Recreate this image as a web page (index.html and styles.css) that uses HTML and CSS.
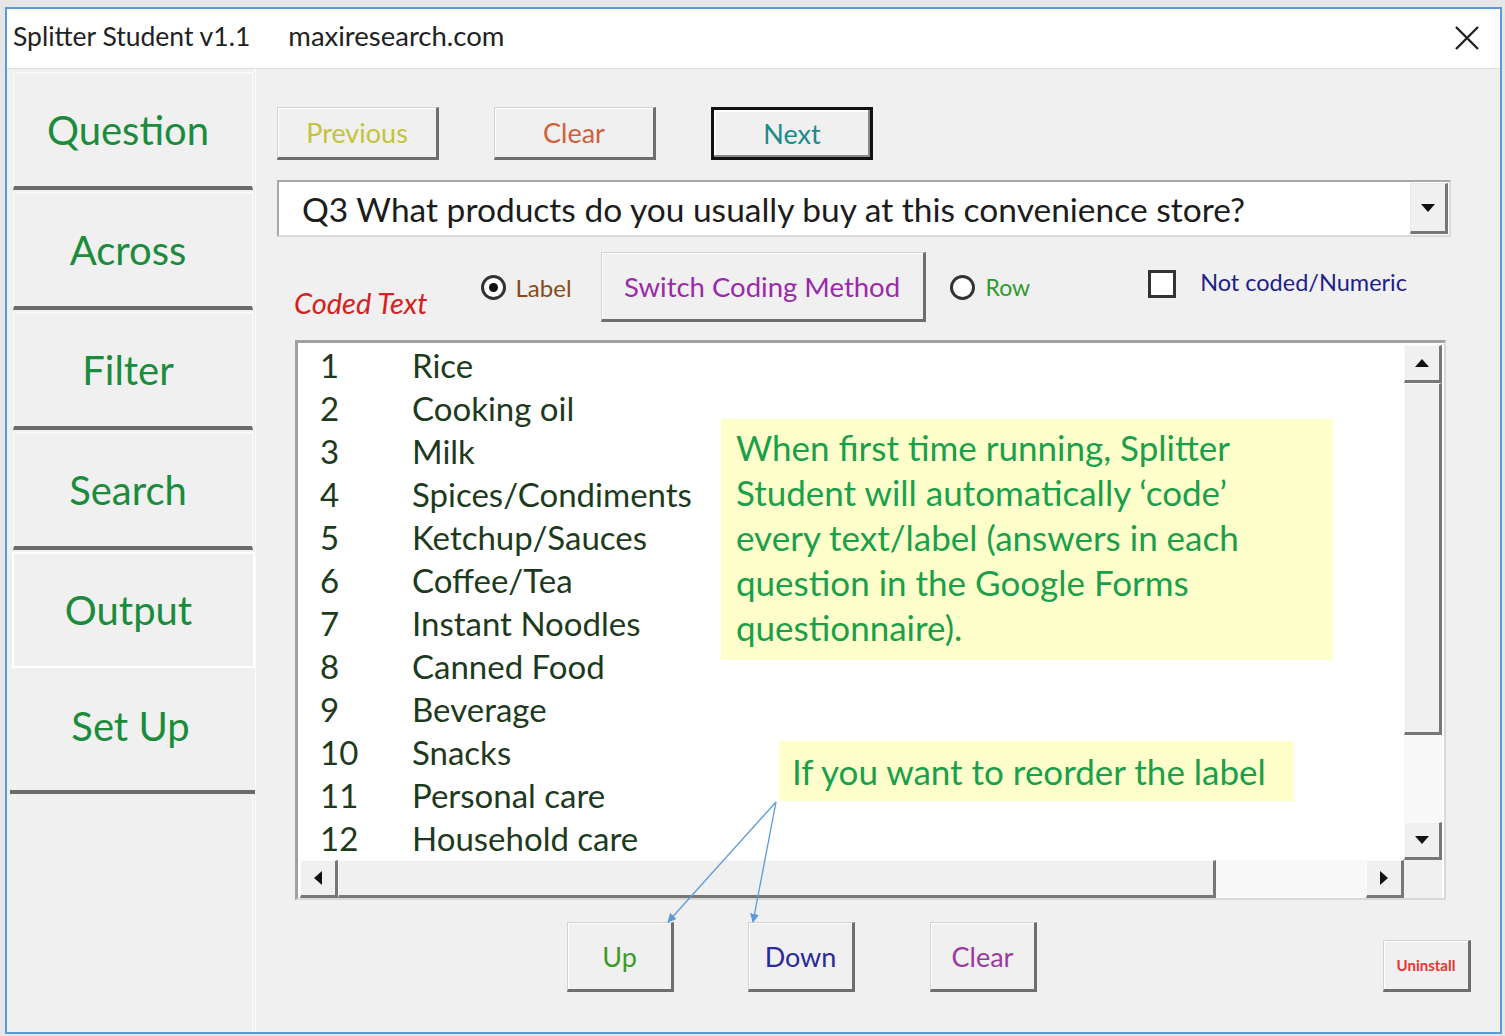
FILE: index.html
```html
<!DOCTYPE html>
<html>
<head>
<meta charset="utf-8">
<title>Splitter Student v1.1</title>
<link rel="stylesheet" href="styles.css">
</head>
<body>
<div class="window">
  <div class="titlebar">
    <span class="app-name">Splitter Student v1.1</span>
    <span class="site">maxiresearch.com</span>
    <svg class="close" width="26" height="26" viewBox="0 0 26 26"><path d="M2 2 L24 24 M24 2 L2 24" stroke="#222" stroke-width="2.4" fill="none"/></svg>
  </div>
  <div class="content">
    <nav class="nav">
      <div class="tab">Question</div>
      <div class="tab">Across</div>
      <div class="tab">Filter</div>
      <div class="tab">Search</div>
      <div class="tab active">Output</div>
      <div class="tab setup">Set Up</div>
      <div class="nav-rest"></div>
    </nav>
    <main class="main">
      <div class="btn-row">
        <button class="btn btn-prev">Previous</button>
        <button class="btn btn-clear">Clear</button>
        <button class="btn btn-next">Next</button>
      </div>
      <div class="combo">
        <span class="combo-text">Q3 What products do you usually buy at this convenience store?</span>
        <span class="combo-drop"><span class="tri-down"></span></span>
      </div>
      <div class="opt-row">
        <span class="coded">Coded Text</span>
        <span class="radio checked"></span>
        <span class="opt-label lbl-label">Label</span>
        <button class="btn btn-switch">Switch Coding Method</button>
        <span class="radio"></span>
        <span class="opt-label lbl-row">Row</span>
        <span class="check"></span>
        <span class="opt-label lbl-num">Not coded/Numeric</span>
      </div>
      <div class="listbox">
        <div class="list-items">
          <div class="item"><span class="num">1</span><span>Rice</span></div>
          <div class="item"><span class="num">2</span><span>Cooking oil</span></div>
          <div class="item"><span class="num">3</span><span>Milk</span></div>
          <div class="item"><span class="num">4</span><span>Spices/Condiments</span></div>
          <div class="item"><span class="num">5</span><span>Ketchup/Sauces</span></div>
          <div class="item"><span class="num">6</span><span>Coffee/Tea</span></div>
          <div class="item"><span class="num">7</span><span>Instant Noodles</span></div>
          <div class="item"><span class="num">8</span><span>Canned Food</span></div>
          <div class="item"><span class="num">9</span><span>Beverage</span></div>
          <div class="item"><span class="num">10</span><span>Snacks</span></div>
          <div class="item"><span class="num">11</span><span>Personal care</span></div>
          <div class="item"><span class="num">12</span><span>Household care</span></div>
        </div>
        <div class="vscroll">
          <span class="sb-btn"><span class="tri-up"></span></span>
          <span class="sb-thumb-v"></span>
          <span class="sb-track"></span>
          <span class="sb-btn"><span class="tri-down"></span></span>
        </div>
        <div class="hscroll">
          <span class="sb-btn"><span class="tri-left"></span></span>
          <span class="sb-thumb-h"></span>
          <span class="sb-track"></span>
          <span class="sb-btn"><span class="tri-right"></span></span>
        </div>
        <div class="sb-corner"></div>
        <div class="note note-1">When first time running, Splitter<br>Student will automatically ‘code’<br>every text/label (answers in each<br>question in the Google Forms<br>questionnaire).</div>
        <div class="note note-2">If you want to reorder the label</div>
      </div>
      <div class="bottom-row">
        <button class="btn btn-up">Up</button>
        <button class="btn btn-down">Down</button>
        <button class="btn btn-clear2">Clear</button>
        <button class="btn btn-uninstall">Uninstall</button>
      </div>
    </main>
  </div>
</div>
<svg class="arrows" width="1505" height="1036" viewBox="0 0 1505 1036">
  <defs>
    <marker id="ah" viewBox="0 0 10 10" refX="9" refY="5" markerWidth="7" markerHeight="7" orient="auto-start-reverse">
      <path d="M0 0 L10 5 L0 10 z" fill="#5b9bd5"/>
    </marker>
  </defs>
  <line x1="776" y1="802" x2="668" y2="922" stroke="#5b9bd5" stroke-width="1.3" marker-end="url(#ah)"/>
  <line x1="776" y1="802" x2="753" y2="922" stroke="#5b9bd5" stroke-width="1.3" marker-end="url(#ah)"/>
</svg>
</body>
</html>
```

FILE: styles.css
```css
* { box-sizing: border-box; }
html, body { margin: 0; padding: 0; }
body {
  position: relative;
  width: 1505px;
  height: 1036px;
  background: #e6e6e6;
  font-family: Lato, "Open Sans", sans-serif;
  overflow: hidden;
}
.window {
  margin: 7px 0 0 5px;
  width: 1497px;
  height: 1027px;
  border: 2px solid #5b9bd5;
  display: flex;
  flex-direction: column;
  background: #f0f0f0;
}
.titlebar {
  height: 60px;
  background: #fff;
  border-bottom: 1px solid #e2e2e2;
  display: flex;
  align-items: center;
  padding-left: 6px;
  padding-bottom: 6px;
  flex-shrink: 0;
}
.app-name { font-size: 26.5px; color: #222; }
.site { font-size: 27.5px; color: #222; margin-left: 38px; }
.close { margin-left: auto; margin-right: 20px; margin-top: 4px; }
.content { flex: 1; display: flex; min-height: 0; }
.nav {
  width: 248px;
  padding: 3px 0 0 6px;
  display: flex;
  flex-direction: column;
  flex-shrink: 0;
}
.tab {
  width: 240px;
  height: 118px;
  margin-bottom: 2px;
  border-top: 1px solid #fbfbfb;
  border-left: 1px solid #fbfbfb;
  border-right: 1px solid #fbfbfb;
  border-bottom: 4px solid #6b6b6b;
  display: flex;
  align-items: center;
  justify-content: center;
  font-size: 40px;
  color: #1a8c3c;
  padding-right: 10px;
}
.tab.active {
  border: 2px solid #ffffff;
  width: 243px;
  margin-left: -1px;
  height: 116px;
  margin-bottom: 2px;
}
.tab.setup {
  width: 246px;
  margin-left: -3px;
  border-top: none;
  border-left: none;
  height: 124px;
  padding-right: 4px;
  padding-bottom: 8px;
}
.nav-rest {
  flex: 1;
  width: 240px;
  border-right: 1px solid #fbfbfb;
}
.main {
  flex: 1;
  padding: 38px 0 0 21px;
  border-left: 1px solid #fafafa;
  display: flex;
  flex-direction: column;
}
.btn {
  font-family: Lato, "Open Sans", sans-serif;
  background: #f0f0f0;
  border-top: 1px solid #d2d2d2;
  border-left: 1px solid #d2d2d2;
  border-right: 3px solid #6e6e6e;
  border-bottom: 3px solid #6e6e6e;
  font-size: 27px;
  padding: 0;
  box-shadow: inset 1px 1px 0 #fff;
}
.btn-row { display: flex; height: 53px; }
.btn-row .btn { width: 162px; height: 53px; }
.btn-clear { margin-left: 55px; color: #d0603a; }
.btn-prev { color: #c4c43a; }
.btn-next {
  margin-left: 55px;
  color: #1d8a8a;
  border: 3px solid #111;
  box-shadow: inset -2px -2px 0 #8a8a8a, inset 2px 2px 0 #fff;
}
.combo {
  margin-top: 20px;
  width: 1174px;
  height: 57px;
  background: #fff;
  border: 2px solid #a8a8a8;
  border-right-color: #dcdcdc;
  border-bottom-color: #dcdcdc;
  display: flex;
  align-items: center;
}
.combo-text { font-size: 33.5px; color: #1c1c1c; padding-left: 23px; flex: 1; white-space: nowrap; }
.combo-drop {
  width: 38px;
  height: 51px;
  margin-right: 1px;
  background: #f0f0f0;
  border-top: 1px solid #e8e8e8;
  border-left: 1px solid #e8e8e8;
  border-right: 3px solid #777;
  border-bottom: 3px solid #777;
  display: flex;
  align-items: center;
  justify-content: center;
}
.tri-down { width: 0; height: 0; border-left: 7px solid transparent; border-right: 7px solid transparent; border-top: 8px solid #111; }
.tri-up { width: 0; height: 0; border-left: 7px solid transparent; border-right: 7px solid transparent; border-bottom: 8px solid #111; }
.tri-left { width: 0; height: 0; border-top: 7px solid transparent; border-bottom: 7px solid transparent; border-right: 8px solid #111; }
.tri-right { width: 0; height: 0; border-top: 7px solid transparent; border-bottom: 7px solid transparent; border-left: 8px solid #111; }
.opt-row {
  margin-top: 15px;
  height: 70px;
  display: flex;
  align-items: center;
}
.coded {
  margin-left: 17px;
  font-size: 29px;
  font-style: italic;
  color: #d22222;
  padding-top: 30px;
}
.radio {
  width: 25px;
  height: 25px;
  border-radius: 50%;
  border: 3px solid #333;
  background: #fff;
  display: flex;
  align-items: center;
  justify-content: center;
  flex-shrink: 0;
}
.coded + .radio { margin-left: 53px; }
.radio.checked::after {
  content: "";
  width: 9px;
  height: 9px;
  border-radius: 50%;
  background: #111;
}
.opt-label { font-size: 23px; }
.lbl-label { margin-left: 10px; color: #8b4a18; font-size: 24px; }
.btn-switch {
  margin-left: 29px;
  width: 325px;
  height: 70px;
  color: #9a2aa8;
  font-size: 27.5px;
}
.btn-switch + .radio { margin-left: 24px; }
.lbl-row { margin-left: 11px; color: #2e9a2e; }
.check {
  margin-left: 118px;
  width: 28px;
  height: 28px;
  border: 3px solid #333;
  background: #fff;
  margin-top: -6px;
}
.lbl-num { margin-left: 24px; color: #1e1e8a; margin-top: -10px; font-size: 23.5px; }
.listbox {
  position: relative;
  margin-top: 18px;
  margin-left: 18px;
  width: 1151px;
  height: 560px;
  background: #fff;
  border-top: 3px solid #a0a0a0;
  border-left: 3px solid #a0a0a0;
  border-right: 2px solid #d8d8d8;
  border-bottom: 2px solid #d8d8d8;
  display: grid;
  grid-template-columns: minmax(0, 1fr) 38px;
  grid-template-rows: minmax(0, 1fr) 38px;
  padding: 0 2px 0 0;
}
.list-items { padding: 1px 0 0 22px; min-height: 0; }
.item {
  display: flex;
  height: 43px;
  line-height: 43px;
  font-size: 33px;
  color: #1e3a1e;
}
.num { width: 92px; }
.vscroll {
  display: flex;
  flex-direction: column;
  background: #f8f8f8;
  margin-top: 2px;
}
.sb-btn {
  width: 38px;
  height: 38px;
  flex-shrink: 0;
  background: #f0f0f0;
  border-top: 1px solid #fafafa;
  border-left: 1px solid #fafafa;
  border-right: 3px solid #777;
  border-bottom: 3px solid #777;
  display: flex;
  align-items: center;
  justify-content: center;
}
.sb-thumb-v {
  height: 352px;
  background: #f0f0f0;
  border-top: 1px solid #fafafa;
  border-left: 1px solid #fafafa;
  border-right: 3px solid #777;
  border-bottom: 3px solid #777;
}
.sb-track { flex: 1; background: #f9f9f9; }
.hscroll {
  display: flex;
  background: #f8f8f8;
  margin-left: 2px;
}
.sb-thumb-h {
  width: 878px;
  background: #f0f0f0;
  border-top: 1px solid #fafafa;
  border-left: 1px solid #fafafa;
  border-right: 3px solid #777;
  border-bottom: 3px solid #777;
}
.sb-corner { background: #f0f0f0; }
.note {
  position: absolute;
  background: #ffffcc;
  color: #1aa04a;
  font-size: 35px;
}
.note-1 {
  left: 423px;
  top: 76px;
  width: 612px;
  height: 241px;
  padding: 6px 10px 0 15px;
  line-height: 45px;
  white-space: nowrap;
}
.note-2 {
  left: 481px;
  top: 398px;
  width: 515px;
  height: 60px;
  padding-left: 13px;
  line-height: 60px;
  white-space: nowrap;
}
.bottom-row {
  margin-top: 22px;
  display: flex;
  align-items: flex-end;
}
.bottom-row .btn { width: 107px; height: 70px; }
.btn-up { margin-left: 290px; color: #3f9a2a; }
.btn-down { margin-left: 74px; color: #2a2a9a; }
.btn-clear2 { margin-left: 75px; color: #9a3aa0; }
.bottom-row .btn-uninstall {
  margin-left: auto;
  margin-right: 29px;
  width: 88px;
  height: 52px;
  font-size: 15px;
  font-weight: bold;
  color: #ee3030;
}
.arrows {
  position: absolute;
  left: 0;
  top: 0;
  pointer-events: none;
}
```
